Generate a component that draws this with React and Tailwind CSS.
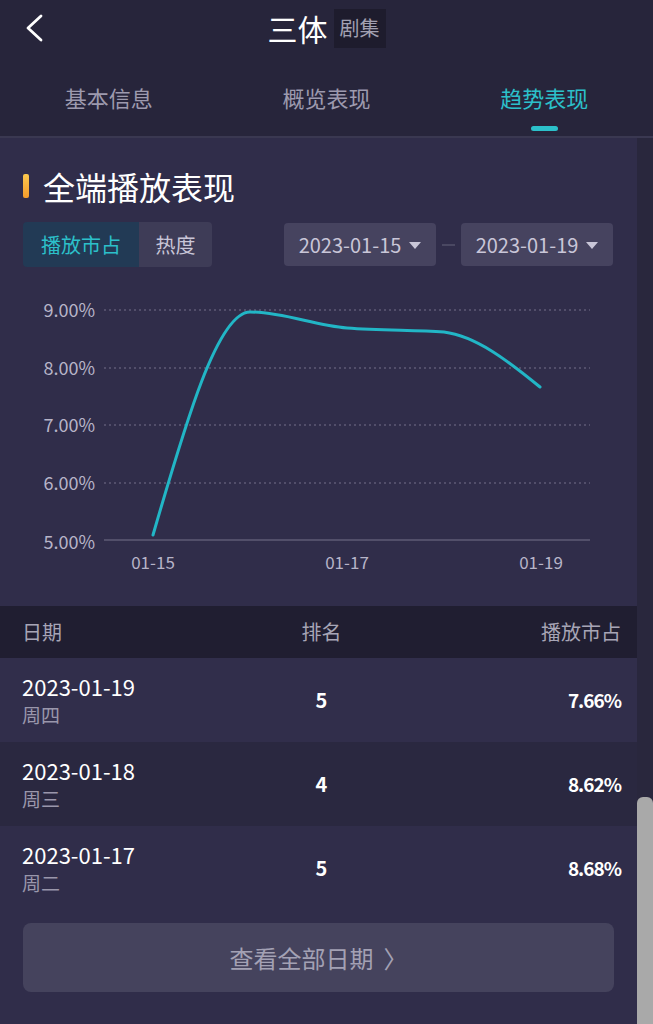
const rows = [
  { date: '2023-01-19', day: '周四', rank: 5, share: '7.66%', bg: 'bg-[#312e4b]' },
  { date: '2023-01-18', day: '周三', rank: 4, share: '8.62%', bg: 'bg-[#2a2840]' },
  { date: '2023-01-17', day: '周二', rank: 5, share: '8.68%', bg: 'bg-[#302d4a]' },
]

const yTicks = [
  { label: '9.00%', y: 310 },
  { label: '8.00%', y: 368 },
  { label: '7.00%', y: 425 },
  { label: '6.00%', y: 483 },
]

function TrendChart() {
  return (
    <svg width="637" height="339" viewBox="0 0 637 339" className="block">
      <g transform="translate(0,-267)" fontFamily="'Noto Sans CJK SC', sans-serif">
        {yTicks.map((t) => (
          <g key={t.label}>
            <line x1="104" x2="590" y1={t.y} y2={t.y} stroke="#5d5a75" strokeWidth="1.5" strokeDasharray="2 3" />
            <text x="95" y={t.y + 7} textAnchor="end" fontSize="18" fill="#b7b4c8">{t.label}</text>
          </g>
        ))}
        <line x1="104" x2="590" y1="540" y2="540" stroke="#5e5b76" strokeWidth="1.5" />
        <text x="95" y="549" textAnchor="end" fontSize="18" fill="#b7b4c8">5.00%</text>
        <text x="153" y="569" textAnchor="middle" fontSize="17" fill="#b7b4c8">01-15</text>
        <text x="347" y="569" textAnchor="middle" fontSize="17" fill="#b7b4c8">01-17</text>
        <text x="541" y="569" textAnchor="middle" fontSize="17" fill="#b7b4c8">01-19</text>
        <path
          d="M153 535 C185.3 423.5 217.7 312 250 312 C282.3 312 314.7 325.3 347 328 C379.3 330.6 411.7 330 444 332 C476 336 508 360.8 540 387"
          fill="none"
          stroke="#22b6c6"
          strokeWidth="3"
          strokeLinecap="round"
        />
      </g>
    </svg>
  )
}

function DatePicker({ value }) {
  return (
    <div className="flex h-[43px] w-[152px] items-center justify-center gap-[8px] rounded-[4px] bg-[#46435f] text-[20px] text-[#c9c6d8]">
      <span>{value}</span>
      <span className="mt-[2px] h-0 w-0 border-x-[6px] border-t-[7px] border-x-transparent border-t-[#c9c6d8]" />
    </div>
  )
}

export default function App() {
  return (
    <div className="flex h-[1024px] w-[653px] flex-col overflow-hidden bg-[#302d4a] font-['Noto_Sans_CJK_SC',sans-serif]">
      <header className="bg-[#27253b] border-b-2 border-[#3a3851]">
        <div className="relative flex h-[56px] items-center justify-center">
          <svg className="absolute left-[22px] top-[13px]" width="24" height="30" viewBox="0 0 24 30">
            <polyline points="19,3 6,15 19,27" fill="none" stroke="#ffffff" strokeWidth="2.8" strokeLinecap="round" strokeLinejoin="round" />
          </svg>
          <span className="text-[30px] leading-none text-white">三体</span>
          <span className="ml-[6px] flex h-[39px] w-[52px] items-center justify-center bg-[#1e1c2d] text-[20px] text-[#a2a0b2]">
            剧集
          </span>
        </div>
        <nav className="grid h-[80px] grid-cols-3">
          <div className="flex flex-col items-center pt-[29px] text-[22px] leading-[24px] text-[#9d9aae]">基本信息</div>
          <div className="flex flex-col items-center pt-[29px] text-[22px] leading-[24px] text-[#9d9aae]">概览表现</div>
          <div className="flex flex-col items-center pt-[29px]">
            <span className="text-[22px] leading-[24px] text-[#2cc0ca]">趋势表现</span>
            <span className="mt-[17px] h-[5px] w-[27px] rounded-full bg-[#2cc0ca]" />
          </div>
        </nav>
      </header>

      <div className="flex min-h-0 flex-1">
        <main className="flex min-w-0 flex-1 flex-col">
          <section className="bg-[#302d4a]">
            <div className="flex items-center gap-[14px] pl-[23px] pt-[30px]">
              <span className="h-[24px] w-[6px] rounded-[2px] bg-gradient-to-b from-[#fbc84e] to-[#f49c2b]" />
              <h2 className="text-[32px] leading-[36px] text-white">全端播放表现</h2>
            </div>
            <div className="mt-[18px] flex items-center pl-[23px] pr-[24px]">
              <div className="flex h-[45px] overflow-hidden rounded-[4px] text-[20px]">
                <span className="flex w-[116px] items-center justify-center bg-[#223a55] text-[#2cc0ca]">播放市占</span>
                <span className="flex w-[73px] items-center justify-center bg-[#3e3c57] text-[#c9c6d8]">热度</span>
              </div>
              <div className="ml-auto flex items-center gap-[6px]">
                <DatePicker value="2023-01-15" />
                <span className="h-[2px] w-[13px] bg-[#4a4862]" />
                <DatePicker value="2023-01-19" />
              </div>
            </div>
            <TrendChart />
          </section>

          <div className="grid h-[52px] grid-cols-3 items-center bg-[#201e31] pl-[22px] pr-[16px] text-[20px] text-[#a7a5b6]">
            <span>日期</span>
            <span className="text-center">排名</span>
            <span className="text-right">播放市占</span>
          </div>

          {rows.map((r) => (
            <div key={r.date} className={`grid h-[84px] grid-cols-3 items-center pl-[22px] pr-[16px] ${r.bg}`}>
              <div className="flex flex-col">
                <span className="text-[22px] leading-[30px] text-white">{r.date}</span>
                <span className="text-[19px] leading-[28px] text-[#9a97ab]">{r.day}</span>
              </div>
              <span className="text-center text-[20px] font-bold text-white">{r.rank}</span>
              <span className="text-right text-[19px] font-bold tracking-[-1px] text-white">{r.share}</span>
            </div>
          ))}

          <button className="mx-[23px] mt-[13px] flex h-[69px] items-center justify-center gap-[10px] rounded-[8px] bg-[#45435d] text-[24px] text-[#a3a1b4]">
            <span>查看全部日期</span>
            <span className="text-[24px]">〉</span>
          </button>
        </main>

        <div className="flex w-[16px] flex-col justify-end bg-[#29273d]">
          <div className="h-[227px] rounded-t-[6px] bg-[#a9a9a9]" />
        </div>
      </div>
    </div>
  )
}
